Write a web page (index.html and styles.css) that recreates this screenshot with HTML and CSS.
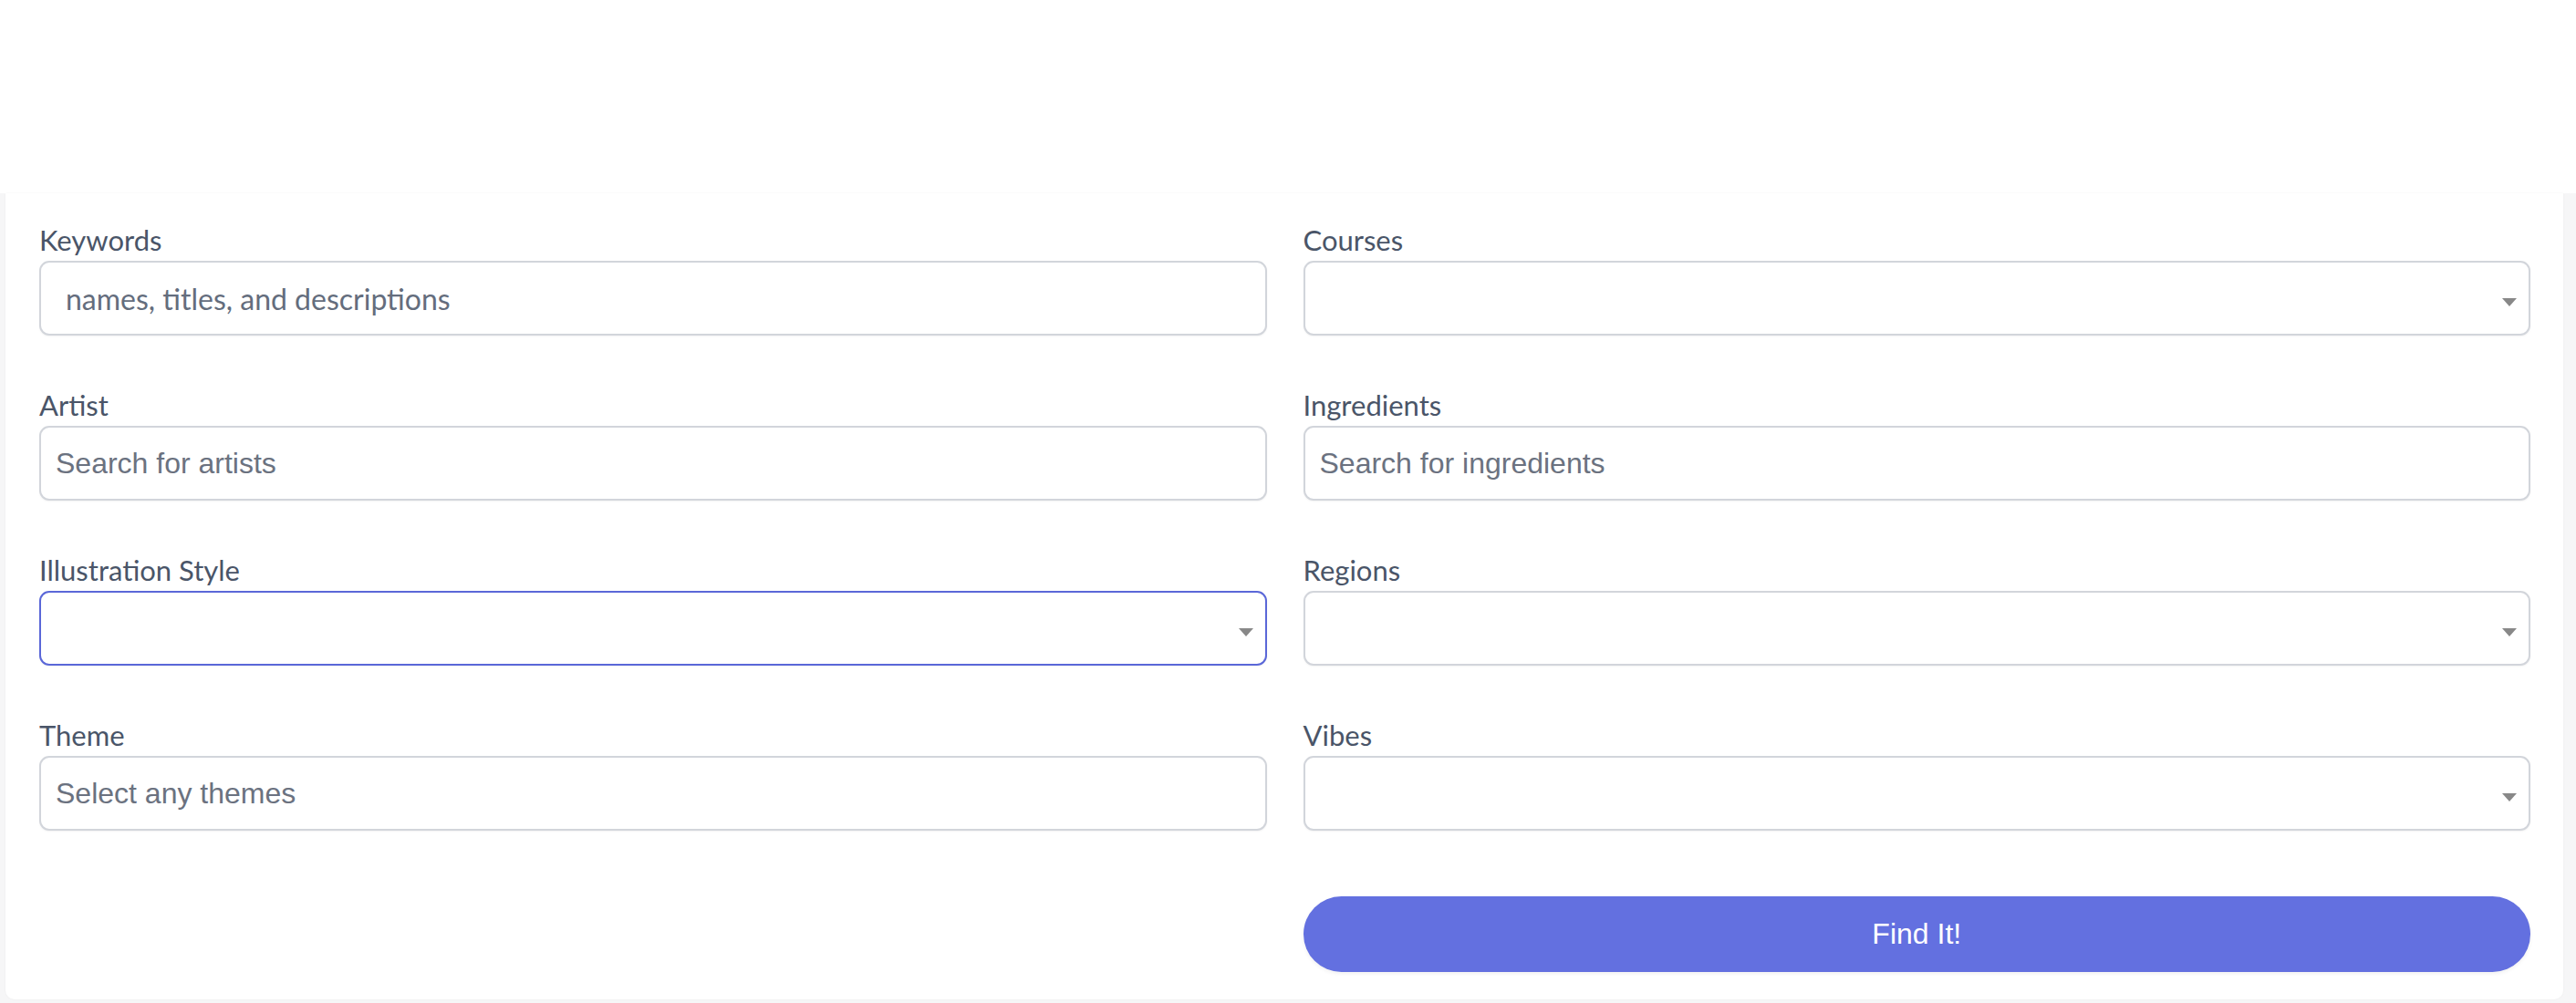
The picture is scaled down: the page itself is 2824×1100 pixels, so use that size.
FILE: index.html
```html
<!DOCTYPE html>
<html>
<head>
<meta charset="utf-8">
<link rel="stylesheet" href="styles.css">
</head>
<body>
<div class="header"></div>
<div class="main">
  <form class="card">
    <div class="grid">
      <div class="field">
        <label class="label">Keywords</label>
        <input class="input input-lato" type="text" placeholder="names, titles, and descriptions">
      </div>
      <div class="field">
        <label class="label">Courses</label>
        <div class="select"><span class="arrow"></span></div>
      </div>
      <div class="field">
        <label class="label">Artist</label>
        <input class="input" type="text" placeholder="Search for artists">
      </div>
      <div class="field">
        <label class="label">Ingredients</label>
        <input class="input" type="text" placeholder="Search for ingredients">
      </div>
      <div class="field">
        <label class="label">Illustration Style</label>
        <div class="select focused"><span class="arrow"></span></div>
      </div>
      <div class="field">
        <label class="label">Regions</label>
        <div class="select"><span class="arrow"></span></div>
      </div>
      <div class="field">
        <label class="label">Theme</label>
        <input class="input" type="text" placeholder="Select any themes">
      </div>
      <div class="field">
        <label class="label">Vibes</label>
        <div class="select"><span class="arrow"></span></div>
      </div>
      <div class="field empty"></div>
      <div class="field button-cell">
        <button class="btn" type="button">Find It!</button>
      </div>
    </div>
  </form>
</div>
</body>
</html>
```

FILE: styles.css
```css
html, body {
  margin: 0;
  padding: 0;
  background: #ffffff;
}
body {
  font-family: "Lato", "Liberation Sans", sans-serif;
  height: 1100px;
  overflow: hidden;
}
.header {
  height: 212px;
  background: #ffffff;
}
.main {
  background: #f6f6f7;
  padding: 0 14px 0 6px;
  height: 888px;
}
.card {
  background: #ffffff;
  border-radius: 0 0 10px 10px;
  box-shadow: 0 0 3px rgba(0,0,0,0.04);
  padding: 33px 36px 30px 37px;
  box-sizing: border-box;
  height: 884px;
}
.grid {
  display: grid;
  grid-template-columns: 1fr 1fr;
  column-gap: 40px;
  row-gap: 58px;
}
.field {
  display: flex;
  flex-direction: column;
}
.label {
  font-family: "Lato", sans-serif;
  font-size: 31px;
  line-height: 36px;
  color: #4a5568;
  margin-bottom: 5px;
}
.input, .select {
  box-sizing: border-box;
  height: 82px;
  border: 2px solid #d2d5db;
  border-radius: 11px;
  background: #ffffff;
  box-shadow: 0 1px 2px rgba(0,0,0,0.05);
  width: 100%;
}
.input {
  font-family: "Liberation Sans", Arial, sans-serif;
  font-size: 32px;
  padding: 0 16px;
  color: #374151;
  outline: none;
}
.input::placeholder {
  color: #6b7280;
}
.input-lato {
  font-family: "Lato", sans-serif;
  font-size: 32px;
  padding: 0 27px;
}
.input-lato::placeholder {
  color: #646d7d;
}
.select {
  display: flex;
  align-items: center;
  justify-content: flex-end;
  padding-right: 13px;
}
.select.focused {
  border-color: #5a67d8;
}
.arrow {
  width: 0;
  height: 0;
  border-left: 8px solid transparent;
  border-right: 8px solid transparent;
  border-top: 9px solid #888888;
  margin-top: 8px;
}
.button-cell {
  padding-top: 14px;
}
.btn {
  height: 83px;
  width: 100%;
  border: none;
  border-radius: 42px;
  background: #6370e0;
  color: #ffffff;
  font-family: "Liberation Sans", Arial, sans-serif;
  font-size: 32px;
  box-shadow: 0 2px 4px rgba(0,0,0,0.06);
  cursor: pointer;
}
```
